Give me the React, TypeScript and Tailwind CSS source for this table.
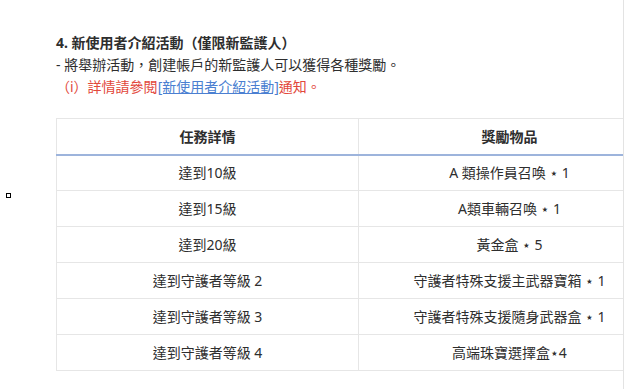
import React from "react";

const rows = [
  { task: "達到10級", reward: "A 類操作員召喚 ⋆ 1" },
  { task: "達到15級", reward: "A類車輛召喚 ⋆ 1" },
  { task: "達到20級", reward: "黃金盒 ⋆ 5" },
  { task: "達到守護者等級 2", reward: "守護者特殊支援主武器寶箱 ⋆ 1" },
  { task: "達到守護者等級 3", reward: "守護者特殊支援隨身武器盒 ⋆ 1" },
  { task: "達到守護者等級 4", reward: "高端珠寶選擇盒⋆4" },
];

const App: React.FC = () => {
  return (
    <div
      className="relative w-[625px] h-[389px] overflow-hidden bg-white text-[#2e2e2e] text-[14px]"
      style={{ fontFamily: '"Noto Sans", "Noto Sans CJK TC", "DejaVu Sans", sans-serif' }}
    >
      <span className="absolute left-[6px] top-[193px] w-[5px] h-[5px] border border-black" />
      <div className="w-[624px] h-full overflow-hidden border-r border-[#e3e3e3] pl-[56px] pt-[32px]">
        <div className="leading-[22px]">
          <p className="font-bold">4. 新使用者介紹活動（僅限新監護人）</p>
          <p>- 將舉辦活動，創建帳戶的新監護人可以獲得各種獎勵。</p>
          <p className="text-[#e2483b]">
            （i）詳情請參閱
            <span className="text-[#4b7fd1] underline">[新使用者介紹活動]</span>
            通知。
          </p>
        </div>
        <table className="mt-[20px] w-[604px] border-collapse table-fixed">
          <thead>
            <tr className="h-[36px] border-b-2 border-[#9db4dc]">
              <th className="w-[302px] border-t border-l border-r border-[#e6e6e6] font-bold text-center">
                任務詳情
              </th>
              <th className="w-[302px] border-t border-r border-[#e6e6e6] font-bold text-center">
                獎勵物品
              </th>
            </tr>
          </thead>
          <tbody>
            {rows.map((row, index) => (
              <tr key={index} className="h-[36px]">
                <td className="border border-[#e6e6e6] text-center">{row.task}</td>
                <td className="border border-[#e6e6e6] text-center">{row.reward}</td>
              </tr>
            ))}
          </tbody>
        </table>
      </div>
    </div>
  );
};

export default App;
